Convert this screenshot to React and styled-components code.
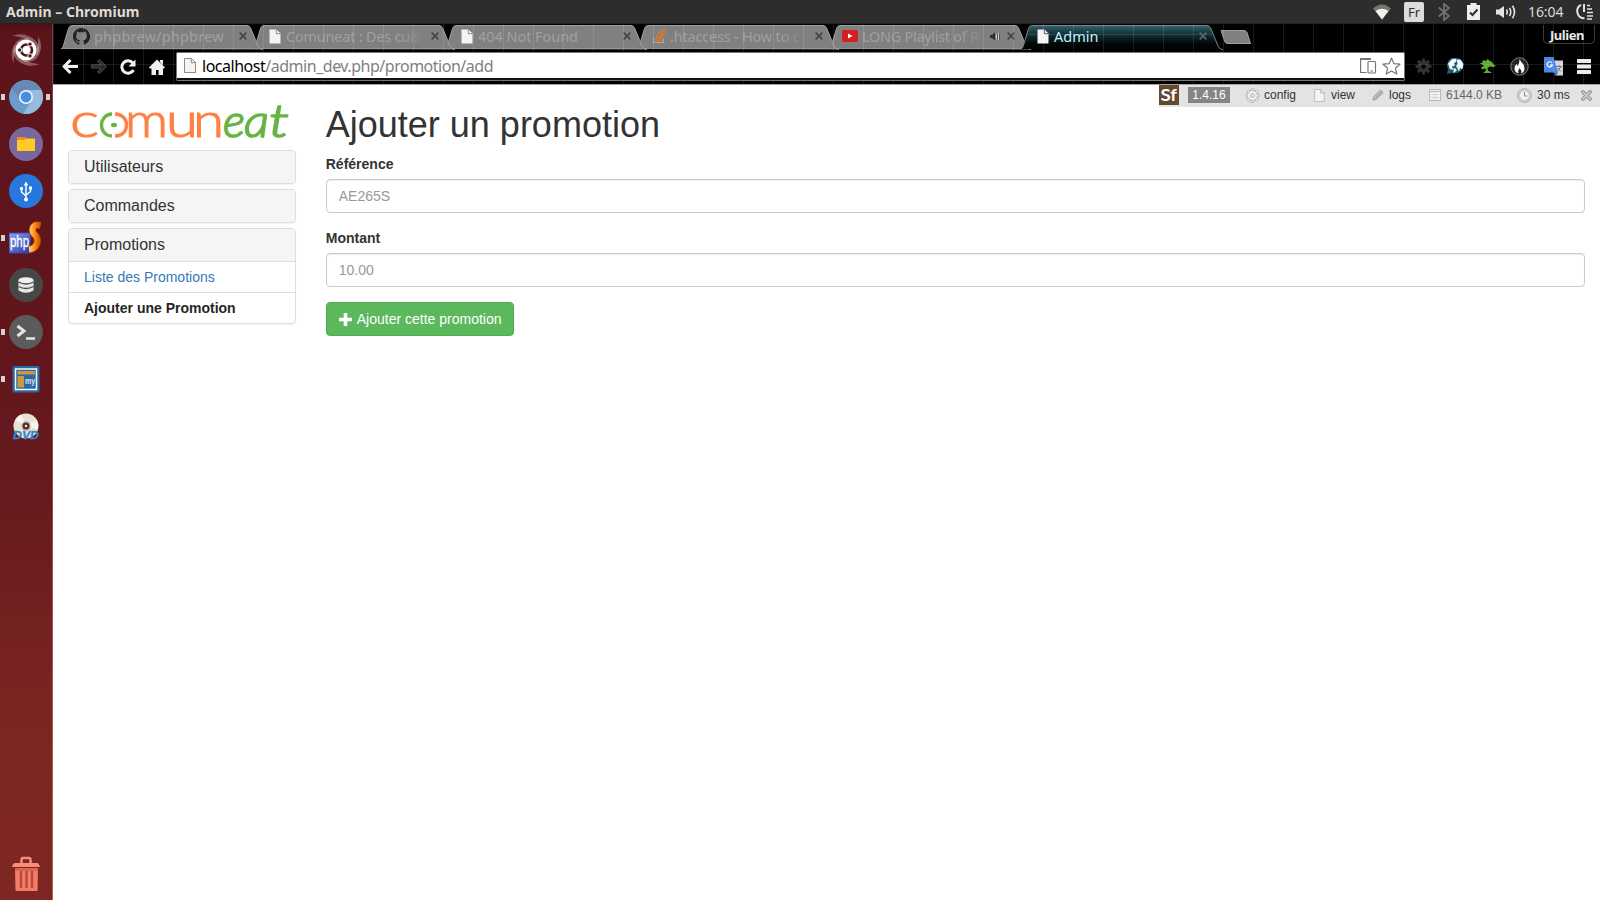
import React from 'react';
import styled, { createGlobalStyle } from 'styled-components';

const GlobalStyle = createGlobalStyle`
  * { box-sizing: border-box; }
  body { margin: 0; background: #fff; overflow: hidden; }
  svg { display: block; flex: none; }
`;

const ui = `"Noto Sans", "Open Sans", sans-serif`;
const web = `"Liberation Sans", Arial, sans-serif`;

/* ---------- desktop ---------- */

const Desktop = styled.div`
  width: 1600px;
  height: 900px;
  display: grid;
  grid-template: 24px 876px / 53px 1547px;
  font-family: ${web};
  overflow: hidden;
`;

const Panel = styled.header`
  grid-column: 1 / 3;
  display: flex;
  align-items: center;
  background: #2d2d2d;
  border-bottom: 1px solid #222;
  color: #dfdbd2;
  font-family: ${ui};
  padding: 0 7px 0 6px;
`;

const PanelTitle = styled.div`
  flex: 1;
  font-size: 14px;
  font-weight: 700;
  letter-spacing: 0.02px;
  line-height: 23px;
`;

const Indicators = styled.div`
  display: flex;
  align-items: center;
  height: 23px;
`;

const Indicator = styled.div`
  width: ${(p) => p.$w}px;
  margin-right: ${(p) => p.$gap || 0}px;
  height: 23px;
  display: flex;
  align-items: center;
`;

const Lang = styled.div`
  width: 20px;
  height: 20px;
  border-radius: 2px;
  background: #dcdcdc;
  color: #2d2d2d;
  font-size: 13px;
  line-height: 20px;
  text-align: center;
  margin-top: 1px;
`;

const Clock = styled.div`
  font-size: 14px;
  letter-spacing: -0.1px;
  line-height: 23px;
  white-space: nowrap;
`;

/* ---------- launcher ---------- */

const Launcher = styled.nav`
  display: flex;
  flex-direction: column;
  padding-top: 2px;
  background: linear-gradient(#4d1015 0, #5c141b 8px, #5f151b 260px, #681a1e 480px, #7c2622 700px, #7d2622 100%);
  border-right: 1px solid;
  border-image: linear-gradient(#6c4347, #8d4a4b 50%, #b4614f) 1;
`;

const LauncherItem = styled.div`
  height: 47px;
  display: grid;
  grid-template-columns: 9px 34px 9px;
  align-items: center;
  margin-top: ${(p) => (p.$last ? 'auto' : 0)};
  margin-bottom: ${(p) => (p.$last ? '2px' : 0)};
`;

const Mark = styled.i`
  width: 4px;
  height: 6px;
  justify-self: ${(p) => (p.$right ? 'end' : 'start')};
  margin: ${(p) => (p.$right ? '0 2px 0 0' : '0 0 0 1px')};
  background: ${(p) => (p.$on ? '#d8cfd0' : 'transparent')};
`;

/* ---------- browser chrome ---------- */

const Browser = styled.section`
  display: flex;
  flex-direction: column;
  min-width: 0;
`;

const Chrome = styled.div`
  position: relative;
  height: 61px;
  flex: none;
  background: #000;
  border-bottom: 1px solid #a3a3a3;
  font-family: ${ui};
`;

const GridLines = styled.div`
  position: absolute;
  inset: 0;
  z-index: 20;
  pointer-events: none;
  background:
    linear-gradient(90deg, rgba(255, 255, 255, 0.1) 1px, transparent 1px) 30px 0 / 30px 100%,
    linear-gradient(transparent 40px, rgba(255, 255, 255, 0.1) 40px 41px, transparent 41px);
`;

const TabStrip = styled.div`
  display: flex;
  height: 26px;
  padding: 1px 5px 0 8px;
`;

const TabBox = styled.div`
  position: relative;
  z-index: ${(p) => p.$z};
  width: 203px;
  height: 25px;
  margin-right: -11px;
  flex: none;
  display: flex;
  align-items: center;
  padding: 0 17px 3px 12px;
  color: ${(p) => (p.$active ? '#b9f3fb' : '#a0a0a0')};
`;

const TabShape = styled.svg`
  position: absolute;
  left: 0;
  top: 0;
  z-index: -1;
`;

const TabTitle = styled.div`
  margin-left: 4px;
  font-size: 14.5px;
  letter-spacing: ${(p) => p.$ls || 0}px;
  line-height: 22px;
  white-space: nowrap;
  ${(p) => p.$fade && 'mask-image: linear-gradient(90deg, #000 calc(100% - 20px), rgba(0, 0, 0, 0.25));'}
`;

const TabEnd = styled.div`
  margin-left: auto;
  display: flex;
  align-items: center;
  gap: 7px;
`;

const NewTab = styled.svg`
  margin: 5px 0 0 7px;
`;

const User = styled.div`
  margin: 0 0 0 auto;
  height: 19px;
  width: 52px;
  border: 1px solid #3c3c3c;
  border-top: 0;
  border-radius: 0 0 5px 5px;
  color: #e8e8e8;
  font-size: 13px;
  font-weight: 700;
  line-height: 20px;
  letter-spacing: -0.45px;
  padding-left: 6px;
`;

const Toolbar = styled.div`
  display: flex;
  align-items: center;
  height: 34px;
  margin-top: -1px;
  padding: 0 9px 0 9px;
`;

const NavButtons = styled.div`
  display: flex;
  gap: 13px;
  width: 114px;
  padding-top: 1px;
`;

const Address = styled.div`
  width: 1229px;
  height: 28px;
  display: flex;
  align-items: center;
  background: #fff;
  border: 1px solid #777;
  border-bottom: 2px solid #111;
  box-shadow: 0 1px 0 #777;
  border-radius: 2px;
  padding: 0 3px 0 7px;
  position: relative;
  z-index: 21;
`;

const Url = styled.div`
  flex: 1;
  margin-left: 6px;
  font-size: 16px;
  letter-spacing: -0.48px;
  line-height: 22px;
  color: #808080;
  b { color: #000; font-weight: 400; }
`;

const AddressActions = styled.div`
  display: flex;
  align-items: center;
  gap: 5px;
`;

const Extensions = styled.div`
  flex: 1;
  display: flex;
  align-items: center;
  justify-content: space-between;
  padding-left: 10px;
`;

/* ---------- web page ---------- */

const Page = styled.main`
  position: relative;
  flex: 1;
  display: flex;
  background: #fff;
  color: #333;
  font-size: 14px;
`;

const Side = styled.aside`
  width: 258px;
  padding: 21px 15px 0;
`;

const Logo = styled.svg`
  width: 228px;
  height: 44px;
  overflow: visible;
`;

const Group = styled.section`
  border: 1px solid #ddd;
  border-radius: 4px;
  margin-bottom: 5px;
  box-shadow: 0 1px 1px rgba(0, 0, 0, 0.05);
  overflow: hidden;
`;

const GroupTitle = styled.h4`
  margin: 0;
  height: 32px;
  padding: 0 15px;
  background: #f5f5f5;
  font-size: 16px;
  font-weight: 400;
  line-height: 31px;
`;

const GroupLink = styled.a`
  display: block;
  height: 31px;
  padding: 0 15px;
  border-top: 1px solid #ddd;
  line-height: 30px;
  color: ${(p) => (p.$current ? '#262626' : '#337ab7')};
  font-weight: ${(p) => (p.$current ? 700 : 400)};
`;

const Content = styled.form`
  flex: 1;
  padding: 20px 15px 0;
`;

const Title = styled.h1`
  margin: 0 0 10px -0.25px;
  height: 39px;
  font-size: 36px;
  font-weight: 400;
  line-height: 39px;
`;

const Field = styled.label`
  display: block;
  margin-bottom: 15px;
  font-weight: 700;
  line-height: 20px;
`;

const FieldName = styled.span`
  display: block;
  margin-left: -0.25px;
`;

const Input = styled.input`
  display: block;
  width: 100%;
  height: 34px;
  margin-top: 5px;
  padding: 6px 12px;
  border: 1px solid #ccc;
  border-radius: 4px;
  box-shadow: inset 0 1px 1px rgba(0, 0, 0, 0.075);
  font: 14px/20px ${web};
  text-indent: -0.25px;
  &::placeholder { color: #999; opacity: 1; }
`;

const Submit = styled.button`
  display: flex;
  align-items: center;
  gap: 4.75px;
  height: 34px;
  width: 188px;
  padding: 0 0 0 12px;
  border: 1px solid #4cae4c;
  border-radius: 4px;
  background: #5cb85c;
  color: #fff;
  font: 14px/20px ${web};
  white-space: nowrap;
`;

const DebugBar = styled.div`
  position: absolute;
  top: 0;
  right: 0;
  width: 441px;
  height: 22px;
  display: flex;
  align-items: center;
  background: #e3e3e3;
  color: #333;
  font-size: 12px;
  padding-bottom: 2px;
`;

const Version = styled.span`
  margin: 0 15px 0 9px;
  width: 42px;
  height: 16px;
  background: #858585;
  color: #fff;
  line-height: 16px;
  text-align: center;
`;

const DebugItem = styled.span`
  display: flex;
  align-items: center;
  gap: ${(p) => p.$gap || 5}px;
  width: ${(p) => p.$w}px;
  color: ${(p) => (p.$dim ? '#666' : '#333')};
  white-space: nowrap;
`;

/* ---------- drawings ---------- */

const PageIcon = ({ fill = '#f4f4f4', line = 'none', fold = '#8a8a8a', w = 12, h = 15 }) => (
  <svg width={w} height={h} viewBox="0 0 12 15">
    <path d="M.5 .5H7.500L11.500 4.500V14.500H.5Z" fill={fill} stroke={line} />
    <path d="M7.300 .5V4.700H11.500" fill="none" stroke={fold} />
  </svg>
);

const GithubIcon = () => (
  <svg width="17" height="17" viewBox="0 0 16 16" fill="#222">
    <path d="M8 0C3.58 0 0 3.58 0 8c0 3.54 2.29 6.53 5.47 7.59.4.07.55-.17.55-.38v-1.49c-2.01.37-2.53-.49-2.69-.94-.09-.23-.48-.94-.82-1.13-.28-.15-.68-.52-.01-.53.63-.01 1.08.58 1.23.82.72 1.21 1.87.87 2.33.66.07-.52.28-.87.51-1.07-1.78-.2-3.64-.89-3.64-3.95 0-.87.31-1.59.82-2.15-.08-.2-.36-1.02.08-2.12 0 0 .67-.21 2.2.82a7.6 7.6 0 0 1 4 0c1.53-1.04 2.2-.82 2.2-.82.44 1.1.16 1.92.08 2.12.51.56.82 1.27.82 2.15 0 3.07-1.87 3.75-3.65 3.95.29.25.54.73.54 1.48v2.2c0 .21.15.46.55.38A8 8 0 0 0 8 0Z" />
  </svg>
);

const StackIcon = () => (
  <svg width="14" height="16" viewBox="0 0 14 16" fill="none">
    <path d="M1.500 10V14.500H11.500V10" stroke="#a8a8a8" />
    <path d="M3 12.500H10M3.200 10L10 11M4 7L10.500 9.600M6 4L11 8M8.500 2L12 6.800M11.500 .5L13 5.500" stroke="#dd792a" strokeWidth="1.400" />
  </svg>
);

const VideoIcon = () => (
  <svg width="16" height="12" viewBox="0 0 16 12">
    <rect width="16" height="12" rx="2" fill="#d51f22" />
    <path d="M6 3.400V8.400L10.500 5.900Z" fill="#fff" />
  </svg>
);

const TabClose = ({ color = '#454545' }) => (
  <svg width="8" height="8" viewBox="0 0 8 8" stroke={color} strokeWidth="1.700">
    <path d="M.7 .7L7.300 7.300M7.300 .7L.7 7.300" />
  </svg>
);

const TabAudio = () => (
  <svg width="10" height="9" viewBox="0 0 10 9">
    <path d="M0 3H2L5 .2V8.800L2 6H0Z" fill="#2f2f2f" />
    <path d="M6.500 2.500V6.500M8.500 1.200V7.800" stroke="#ccc" />
    <path d="M7.500 2V7M9.500 1.500V7.500" stroke="#333" strokeWidth=".6" />
  </svg>
);

const Outline = ({ active }) => (
  <TabShape width="204" height="26" viewBox="0 0 204 26">
    <defs>
      <linearGradient id="activeTab" x2="0" y2="1">
        <stop offset="0" stopColor="#35626a" />
        <stop offset=".35" stopColor="#143238" />
        <stop offset=".75" stopColor="#020809" />
        <stop offset="1" stopColor="#000" />
      </linearGradient>
    </defs>
    <path
      d="M0 24C2 23 2.500 20 3.500 17L7.500 3.500C8.500 1 9.500 .5 12 .5H185C188 .5 189 1.500 190 4L197 21C198 23.500 200 24.500 202 24.500"
      fill={active ? 'url(#activeTab)' : '#808080'}
      stroke={active ? '#78898c' : '#a0a0a0'}
    />
    {active ? <path d="M7 9.500H192" stroke="#2d4a4f" /> : <path d="M2 23.500H198" stroke="#949494" />}
  </TabShape>
);

const WifiIcon = () => (
  <svg width="18" height="16" viewBox="0 0 18 16">
    <path d="M0 4.500Q9-3.500 18 4.500L9 15.500Z" fill="#77756f" />
    <path d="M2.500 7Q9 2.500 15.500 7L9 15.500Z" fill="#f2f0ea" />
  </svg>
);

const BluetoothIcon = () => (
  <svg width="12" height="18" viewBox="0 0 12 18" fill="none" stroke="#76746f" strokeWidth="1.700">
    <path d="M.8 4.500L11 13L6 17V1L11 5L.8 13.500" />
  </svg>
);

const BatteryIcon = () => (
  <svg width="13" height="17" viewBox="0 0 13 17">
    <path d="M3.500 0H9.500V2H13V17H0V2H3.500Z" fill="#f0eee8" />
    <path d="M3 9.500L5.500 12L10.500 6.500" fill="none" stroke="#2d2d2d" strokeWidth="2" />
  </svg>
);

const VolumeIcon = () => (
  <svg width="20" height="14" viewBox="0 0 20 14" fill="none" stroke="#e6e3dc" strokeWidth="1.600">
    <path d="M0 4.500H3L8 1V13L3 9.500H0Z" fill="#e6e3dc" stroke="none" />
    <path d="M10.500 4.500Q12 7 10.500 9.500M13.500 2.800Q16 7 13.500 11.200M16.500 .8Q20.500 7 16.500 13.200" />
  </svg>
);

const SessionIcon = () => (
  <svg width="17" height="17" viewBox="0 0 17 17" fill="none" stroke="#e6e3dc">
    <path d="M5 1.800A7.200 7.200 0 0 0 8.500 15.300" strokeWidth="2" />
    <path d="M8 1V9" strokeWidth="2" />
    <path d="M11 2.500H14M11 6H16M11 9.500H17M11 13H17M11 16H16" strokeWidth="1.700" />
  </svg>
);

const BackIcon = () => (
  <svg width="16" height="15" viewBox="0 0 16 15" fill="none" stroke="#f1f1f1" strokeWidth="3">
    <path d="M8.500 1L2.200 7.500L8.500 14M2.500 7.500H16" />
  </svg>
);

const ForwardIcon = () => (
  <svg width="16" height="15" viewBox="0 0 16 15" fill="#262626" stroke="#505050">
    <path d="M.5 6H10L6.500 2L8.500 .7L15.500 7.500L8.500 14.300L6.500 13L10 9H.5Z" />
  </svg>
);

const ReloadIcon = () => (
  <svg width="16" height="16" viewBox="0 0 16 16">
    <path d="M12.800 4A6.200 6.200 0 1 0 13.500 11" fill="none" stroke="#f1f1f1" strokeWidth="3" />
    <path d="M15.500 .5V7.500H8.500Z" fill="#f1f1f1" />
  </svg>
);

const HomeIcon = () => (
  <svg width="16" height="16" viewBox="0 0 16 16" fill="#f1f1f1">
    <path d="M8 .5L16 8.500L14.800 9.500H14V16H9.500V11H7V16H2.500V9.500H1L0 8.500ZM11 1H14V6L11 3Z" />
  </svg>
);

const DevicesIcon = () => (
  <svg width="17" height="17" viewBox="0 0 17 17" fill="none" stroke="#777" strokeWidth="1.200">
    <path d="M6.500 15.500H.6V1.500H11M.6 2.500H11" />
    <rect x="8" y="4.500" width="7.500" height="11.500" rx="1" />
    <path d="M10.500 14H13" />
  </svg>
);

const StarIcon = () => (
  <svg width="19" height="18" viewBox="0 0 19 18" fill="#fff" stroke="#777" strokeWidth="1.200" strokeLinejoin="round">
    <path d="M9.500 1L11.900 6.700L18 7.200L13.400 11.200L14.800 17L9.500 13.900L4.200 17L5.600 11.200L1 7.200L7.100 6.700Z" />
  </svg>
);

const teeth = [0, 45, 90, 135, 180, 225, 270, 315];

const CogIcon = ({ size, fill, stroke, hole }) => (
  <svg width={size} height={size} viewBox="0 0 16 16">
    {teeth.map((a) => (
      <rect key={a} x="6.500" y=".5" width="3" height="4" rx=".8" fill={fill} stroke={stroke} transform={`rotate(${a} 8 8)`} />
    ))}
    <circle cx="8" cy="8" r="5.300" fill={fill} stroke={stroke} />
    <circle cx="8" cy="8" r="2.100" fill={hole} stroke={stroke} />
  </svg>
);

const GlobeIcon = () => (
  <svg width="18" height="17" viewBox="0 0 18 17">
    <path d="M1 16L2 11A8 8 0 1 1 7 15Z" fill="#1d5a6b" />
    <path d="M2.500 5.500L6 1.500L10 1L9.500 4L7.500 5.500L8.500 7.500L5.500 8L6.500 11.500L4 10.500ZM11 2L14.500 2L17 6L16 11L14 9L13 12.500L10.500 8L12 6ZM8 10L10.500 12L8 14.500Z" fill="#f0fbfd" stroke="#f0fbfd" strokeWidth=".8" />
  </svg>
);

const TreeIcon = () => (
  <svg width="17" height="15" viewBox="0 0 17 15" fill="#5fae33">
    <path d="M0 4.500L3 4L4 1L7 2L8.500 0L11 2L13 3L14.500 5.500L17 7L14 8L11 7.500L8.500 9L9 11.500L13 14H4L6 12.500L7 11L6 9.500L3 10.500L2 8.500L5 7L3.500 5.500Z" />
  </svg>
);

const FlameIcon = () => (
  <svg width="19" height="19" viewBox="0 0 19 19">
    <circle cx="9.500" cy="9.500" r="8.700" fill="#222" stroke="#808080" />
    <path d="M9.500 2C10.500 5 14.500 7 14.500 11.500C14.500 14 13 16 11 16.500C12 14.500 11 12.500 9.500 11C8.500 13 7.500 14.500 8.500 16.500C6 16 4.500 14 4.500 11.500C4.500 9.500 5.500 8.500 6.500 7L7.500 9C9 7 9.500 5 9.500 2Z" fill="#fff" />
  </svg>
);

const TranslateIcon = () => (
  <svg width="19" height="19" viewBox="0 0 19 19">
    <path d="M8 3.500H19V18.500H11Z" fill="#d6d6d6" />
    <path d="M12 9.500H18M15 8V9.500M13 15L17 9.500M13.500 11L17 14.500" stroke="#607d8b" fill="none" />
    <path d="M0 0H9.500L14 15.500H0Z" fill="#4a88e8" />
    <path d="M10 15.500H14L11.500 19Z" fill="#2d5bb5" />
    <path d="M8 6A2.600 2.600 0 1 0 8.300 8H6" stroke="#fff" strokeWidth="1.200" fill="none" />
  </svg>
);

const MenuIcon = () => (
  <svg width="14" height="15" viewBox="0 0 14 15" fill="#ececec">
    <rect width="14" height="4" rx=".5" />
    <rect y="5.500" width="14" height="4" rx=".5" />
    <rect y="11" width="14" height="4" rx=".5" />
  </svg>
);

/* launcher icons, on a 34px canvas */

const DashIcon = () => (
  <svg width="34" height="36" viewBox="0 0 34 36">
    <g fill="#fff">
      <path d="M3 4Q16-1 27 9Q32 15 28 24Q28 10 17 7Q9 4 3 4Z" opacity=".3" />
      <path d="M31 32Q18 37 8 28Q2 21 6 12Q6 25 17 29Q25 32 31 32Z" opacity=".3" />
      <path d="M5 32Q-1 20 8 9Q14 4 22 7Q10 9 7 18Q4 25 5 32Z" opacity=".28" />
      <path d="M29 4Q36 16 27 27Q20 32 13 29Q24 27 27 18Q30 12 29 4Z" opacity=".32" />
    </g>
    <circle cx="17" cy="18" r="10.500" fill="#fff" />
    <circle cx="17.500" cy="18" r="5.500" fill="none" stroke="#4d161a" strokeWidth="2.600" />
    <g fill="#4d161a" stroke="#fff" strokeWidth="1">
      <circle cx="10.700" cy="18" r="2.200" />
      <circle cx="21" cy="12.100" r="2.200" />
      <circle cx="21" cy="23.900" r="2.200" />
    </g>
  </svg>
);

const ChromiumIcon = () => (
  <svg width="34" height="34" viewBox="0 0 34 34">
    <circle cx="17" cy="17" r="17" fill="#6b9ccb" />
    <path d="M2.500 8.200A17 17 0 0 1 32 9.500L17 10.500L10 17Z" fill="#6889b4" />
    <path d="M17 10H32.400A17 17 0 0 1 14 33.700L23 20.500Z" fill="#95bbdd" />
    <circle cx="17" cy="17" r="7" fill="#f2f6fb" />
    <circle cx="17" cy="17" r="5.400" fill="#468ee0" />
  </svg>
);

const FilesIcon = () => (
  <svg width="34" height="34" viewBox="0 0 34 34">
    <circle cx="17" cy="17" r="17" fill="#7967a0" />
    <path d="M8 10H16L18 12H26V23H8Z" fill="#f58a1f" />
    <path d="M8 13H15L17 11.500H26V24H8Z" fill="#ffc928" />
  </svg>
);

const UsbIcon = () => (
  <svg width="34" height="34" viewBox="0 0 34 34">
    <circle cx="17" cy="17" r="17" fill="#2877dd" />
    <path d="M17 9V25M12.500 15V18L17 22M21.500 14V17.500L17 21" fill="none" stroke="#fff" strokeWidth="1.500" />
    <g fill="#fff">
      <path d="M14.700 11.500L17 7.500L19.300 11.500Z" />
      <circle cx="17" cy="25.500" r="2" />
      <circle cx="12.500" cy="14.500" r="1.700" />
      <rect x="20" y="12.500" width="3" height="3" />
    </g>
  </svg>
);

const PhpStormIcon = () => (
  <svg width="34" height="34" viewBox="0 0 34 34">
    <defs>
      <linearGradient id="phpBlue" x2="1" y2="1">
        <stop offset="0" stopColor="#8fa5ea" />
        <stop offset="1" stopColor="#2533a8" />
      </linearGradient>
      <linearGradient id="bolt" x2="1" y2="0">
        <stop offset="0" stopColor="#ffd27a" />
        <stop offset=".5" stopColor="#ff8a12" />
        <stop offset="1" stopColor="#c64d05" />
      </linearGradient>
    </defs>
    <path d="M0 12H22L20 32H0Z" fill="url(#phpBlue)" stroke="#3949b5" />
    <text x="1" y="26" fontFamily="Liberation Sans, sans-serif" fontSize="17" fill="#fff" stroke="#fff" strokeWidth=".3" textLength="19" lengthAdjust="spacingAndGlyphs">php</text>
    <path d="M31.500 4.500Q24 2.500 23.500 9Q23.500 12 27 15Q30 20 27 24.500Q25 28 20 28.500" fill="none" stroke="#8d3a08" strokeWidth="7.500" />
    <path d="M31.500 4.500Q24 2.500 23.500 9Q23.500 12 27 15Q30 20 27 24.500Q25 28 20 28.500" fill="none" stroke="url(#bolt)" strokeWidth="6" />
  </svg>
);

const DatabaseIcon = () => (
  <svg width="34" height="34" viewBox="0 0 34 34">
    <circle cx="17" cy="17" r="17" fill="#474747" />
    <path d="M9.500 12V22.500Q17 27 24.500 22.500V12Z" fill="#e6e6e6" />
    <ellipse cx="17" cy="12" rx="7.500" ry="2.800" fill="#efefef" />
    <path d="M9.500 14Q17 18 24.500 14M9.500 18.500Q17 22.500 24.500 18.500" fill="none" stroke="#4a4a4a" strokeWidth="1.400" />
  </svg>
);

const TerminalIcon = () => (
  <svg width="34" height="34" viewBox="0 0 34 34" fill="none" stroke="#e4e4e4">
    <circle cx="17" cy="17" r="17" fill="#5b5b5b" stroke="none" />
    <path d="M8.500 11L15 16L8.500 21" strokeWidth="3" />
    <path d="M17 23.500H26" strokeWidth="2.500" />
  </svg>
);

const MysqlIcon = () => (
  <svg width="34" height="34" viewBox="0 0 34 34">
    <rect x="3.500" y="4" width="27" height="26.500" rx="2" fill="#2c68a5" />
    <rect x="6.500" y="7" width="21" height="20.500" fill="#2c68a5" stroke="#f4f8fb" strokeWidth="1.500" />
    <path d="M8.500 9H26V12.500H8.500ZM8.500 14H15V25.500H8.500Z" fill="#c99a36" />
    <text x="16" y="22" fontFamily="Liberation Sans, sans-serif" fontWeight="700" fontSize="8.500" fill="#dce8f2" textLength="10" lengthAdjust="spacingAndGlyphs">my</text>
  </svg>
);

const DvdIcon = () => (
  <svg width="34" height="34" viewBox="0 0 34 34">
    <circle cx="17" cy="17" r="12.500" fill="#e9e3d3" />
    <path d="M17 17L6 11A12.500 12.500 0 0 1 12 5.500ZM17 17L28 11A12.500 12.500 0 0 1 29 20Z" fill="#fff" opacity=".6" />
    <circle cx="17" cy="17" r="4.500" fill="#9a9a90" />
    <circle cx="17" cy="17" r="3.200" fill="#5d2224" />
    <circle cx="17" cy="17" r="1.300" fill="#e9e3d3" />
    <text x="4" y="29.500" fontFamily="Liberation Sans, sans-serif" fontWeight="700" fontStyle="italic" fontSize="11" fill="#2d86cf" stroke="#2d86cf" strokeWidth=".3" textLength="26" lengthAdjust="spacingAndGlyphs">DVD</text>
  </svg>
);

const TrashIcon = () => (
  <svg width="34" height="38" viewBox="0 0 34 38">
    <path d="M6 12H29L28.500 35H6.500Z" fill="#f47c66" />
    <path d="M6 12H29V15H6Z" fill="#d96653" />
    <path d="M3 11Q4 7 6 7H28Q30 7 31 11Z" fill="#fa8b74" />
    <path d="M12.500 7V3.500Q12.500 2 14 2H20Q21.500 2 21.500 3.500V7" fill="none" stroke="#fa8b74" strokeWidth="2.500" />
    <path d="M12 15V32M17.500 15V32M23 15V32" stroke="#b54b3f" strokeWidth="2.400" />
  </svg>
);

/* the first "o" is a ring split in a green and an orange half round a dot */
const ComuneatLogo = () => (
  <Logo viewBox="0 0 228 44">
    <g fontFamily="Lato, sans-serif" fontSize="48" fontWeight="300" fill="#ff8040" stroke="#ff8040" strokeWidth="1.100">
      <text x="2" y="30.500" textLength="29" lengthAdjust="spacingAndGlyphs">c</text>
      <text x="57" y="30.500" textLength="43" lengthAdjust="spacingAndGlyphs">m</text>
      <text x="98" y="30.500" textLength="32" lengthAdjust="spacingAndGlyphs">u</text>
      <text x="125" y="30.500" textLength="31" lengthAdjust="spacingAndGlyphs">n</text>
    </g>
    <g fill="none" strokeWidth="3.400">
      <path d="M44 8C37 8.300 33.500 14 33.500 19C33.500 24.500 37 29.800 44 30" stroke="#67b346" />
      <path d="M47 8C55 8.300 58.500 14 58.500 19C58.500 24.500 55 29.800 47 30" stroke="#ff8040" />
    </g>
    <ellipse cx="46" cy="19" rx="3" ry="2.200" fill="#67b346" />
    <g fontFamily="Lato, sans-serif" fontStyle="italic" fontSize="46" fontWeight="300" fill="#67b346" stroke="#67b346" strokeWidth="1.600">
      <text x="155" y="30.500" textLength="22" lengthAdjust="spacingAndGlyphs">e</text>
      <text x="176" y="30.500" textLength="25" lengthAdjust="spacingAndGlyphs">a</text>
      <text x="201" y="30.500" textLength="20" lengthAdjust="spacingAndGlyphs">t</text>
    </g>
  </Logo>
);

const PlusIcon = () => (
  <svg width="13" height="13" viewBox="0 0 13 13">
    <path d="M4.700 0H8.300V4.700H13V8.300H8.300V13H4.700V8.300H0V4.700H4.700Z" fill="#fff" />
  </svg>
);

const SfIcon = () => (
  <svg width="20" height="20" viewBox="0 0 20 20">
    <rect width="20" height="20" fill="#63492f" />
    <text x="1.500" y="16" fontFamily="Lato, sans-serif" fontWeight="700" fontSize="17" fill="#fff" textLength="16.500" lengthAdjust="spacingAndGlyphs">Sf</text>
  </svg>
);

const PencilIcon = () => (
  <svg width="12" height="12" viewBox="0 0 12 12">
    <path d="M1 11L2 7.500L8.500 1L11.200 3.500L4.500 10Z" fill="#c9c9c9" stroke="#959595" />
    <path d="M3.500 8.800L9.500 2.800" stroke="#8c8c8c" />
  </svg>
);

const MemoryIcon = () => (
  <svg width="12" height="12" viewBox="0 0 12 12">
    <rect x=".5" y=".5" width="11" height="11" fill="#f0f0f0" stroke="#b9b9b9" />
    <path d="M1 2.500H11" stroke="#b9b9b9" />
    <path d="M2.500 5.500H9.500M2.500 8.500H9.500" stroke="#cfcfcf" />
  </svg>
);

const TimeIcon = () => (
  <svg width="15" height="15" viewBox="0 0 15 15" fill="none">
    <circle cx="7.500" cy="7.500" r="6.900" fill="#dcdcdc" stroke="#a9a9a9" />
    <circle cx="7.500" cy="7.500" r="5" fill="#f3f3f3" stroke="#b9b9b9" />
    <path d="M7.500 4V8H10.500" stroke="#888" />
  </svg>
);

const DismissIcon = () => (
  <svg width="11" height="11" viewBox="0 0 11 11" strokeLinecap="round">
    <path d="M2 2L9 9M9 2L2 9" stroke="#989898" strokeWidth="3.800" />
    <path d="M2 2L9 9M9 2L2 9" stroke="#d2d2d2" strokeWidth="1.500" />
  </svg>
);

/* ---------- data ---------- */

const tabs = [
  { title: 'phpbrew/phpbrew', icon: <GithubIcon />, ls: 0.2 },
  { title: 'Comuneat : Des cuis', icon: <PageIcon />, pad: 4, fade: true, ls: -0.22 },
  { title: '404 Not Found', icon: <PageIcon />, pad: 4, ls: -0.05 },
  { title: '.htaccess - How to c', icon: <StackIcon />, pad: 3, fade: true, ls: -0.2 },
  { title: 'LONG Playlist of R', icon: <VideoIcon />, pad: 1, fade: true, audio: true, ls: -0.3 },
  { title: 'Admin', icon: <PageIcon fold="#555" />, pad: 4, active: true, ls: 0 },
];

const launcher = [
  { icon: <DashIcon /> },
  { icon: <ChromiumIcon />, left: true, right: true },
  { icon: <FilesIcon /> },
  { icon: <UsbIcon /> },
  { icon: <PhpStormIcon />, left: true },
  { icon: <DatabaseIcon /> },
  { icon: <TerminalIcon />, left: true },
  { icon: <MysqlIcon />, left: true },
  { icon: <DvdIcon /> },
  { icon: <TrashIcon />, last: true },
];

const TabIconSlot = styled.div`
  width: 17px;
  flex: none;
  padding-left: ${(p) => p.$pad || 0}px;
`;

function Tab({ tab, index }) {
  return (
    <TabBox $z={tab.active ? 12 : 10 - index} $active={tab.active}>
      <Outline active={tab.active} />
      <TabIconSlot $pad={tab.pad}>{tab.icon}</TabIconSlot>
      <TabTitle $fade={tab.fade} $ls={tab.ls}>{tab.title}</TabTitle>
      <TabEnd>
        {tab.audio && <TabAudio />}
        <TabClose color={tab.active ? '#59686a' : undefined} />
      </TabEnd>
    </TabBox>
  );
}

export default function App() {
  return (
    <Desktop>
      <GlobalStyle />
      <Panel>
        <PanelTitle>Admin – Chromium</PanelTitle>
        <Indicators>
          <Indicator $w={18} $gap={13}><WifiIcon /></Indicator>
          <Indicator $w={20} $gap={14}><Lang>Fr</Lang></Indicator>
          <Indicator $w={12} $gap={17}><BluetoothIcon /></Indicator>
          <Indicator $w={13} $gap={16}><BatteryIcon /></Indicator>
          <Indicator $w={20} $gap={12}><VolumeIcon /></Indicator>
          <Indicator $w={36} $gap={12}><Clock>16:04</Clock></Indicator>
          <Indicator $w={17}><SessionIcon /></Indicator>
        </Indicators>
      </Panel>

      <Launcher>
        {launcher.map((item, i) => (
          <LauncherItem key={i} $last={item.last}>
            <Mark $on={item.left} />
            {item.icon}
            <Mark $right $on={item.right} />
          </LauncherItem>
        ))}
      </Launcher>

      <Browser>
        <Chrome>
          <GridLines />
          <TabStrip>
            {tabs.map((tab, i) => <Tab key={tab.title} tab={tab} index={i} />)}
            <NewTab width="31" height="15" viewBox="0 0 31 15">
              <path d="M1 .5H24Q26 .5 27 2.500L30.500 13.500H8Q6 13.500 5 12Z" fill="#808080" stroke="#a0a0a0" />
            </NewTab>
            <User>Julien</User>
          </TabStrip>
          <Toolbar>
            <NavButtons>
              <BackIcon />
              <ForwardIcon />
              <ReloadIcon />
              <HomeIcon />
            </NavButtons>
            <Address>
              <PageIcon line="#8b8b8b" w={12} h={15} />
              <Url><b>localhost</b>/admin_dev.php/promotion/add</Url>
              <AddressActions>
                <DevicesIcon />
                <StarIcon />
              </AddressActions>
            </Address>
            <Extensions>
              <CogIcon size={17} fill="#333" hole="#000" />
              <GlobeIcon />
              <TreeIcon />
              <FlameIcon />
              <TranslateIcon />
              <MenuIcon />
            </Extensions>
          </Toolbar>
        </Chrome>

        <Page>
          <Side>
            <ComuneatLogo />
            <Group><GroupTitle>Utilisateurs</GroupTitle></Group>
            <Group><GroupTitle>Commandes</GroupTitle></Group>
            <Group>
              <GroupTitle>Promotions</GroupTitle>
              <GroupLink>Liste des Promotions</GroupLink>
              <GroupLink $current>Ajouter une Promotion</GroupLink>
            </Group>
          </Side>
          <Content>
            <Title>Ajouter un promotion</Title>
            <Field><FieldName>Référence</FieldName><Input placeholder="AE265S" /></Field>
            <Field><FieldName>Montant</FieldName><Input placeholder="10.00" /></Field>
            <Submit type="button"><PlusIcon />Ajouter cette promotion</Submit>
          </Content>
          <DebugBar>
            <SfIcon />
            <Version>1.4.16</Version>
            <DebugItem $w={69} $gap={4}><CogIcon size={15} fill="#f2f2f2" stroke="#b5b5b5" hole="#e3e3e3" />config</DebugItem>
            <DebugItem $w={58} $gap={6}><PageIcon line="#b5b5b5" fold="#b5b5b5" w={11} h={13} />view</DebugItem>
            <DebugItem $w={57}><PencilIcon />logs</DebugItem>
            <DebugItem $w={88} $dim><MemoryIcon />6144.0 KB</DebugItem>
            <DebugItem $w={64}><TimeIcon />30 ms</DebugItem>
            <DismissIcon />
          </DebugBar>
        </Page>
      </Browser>
    </Desktop>
  );
}
